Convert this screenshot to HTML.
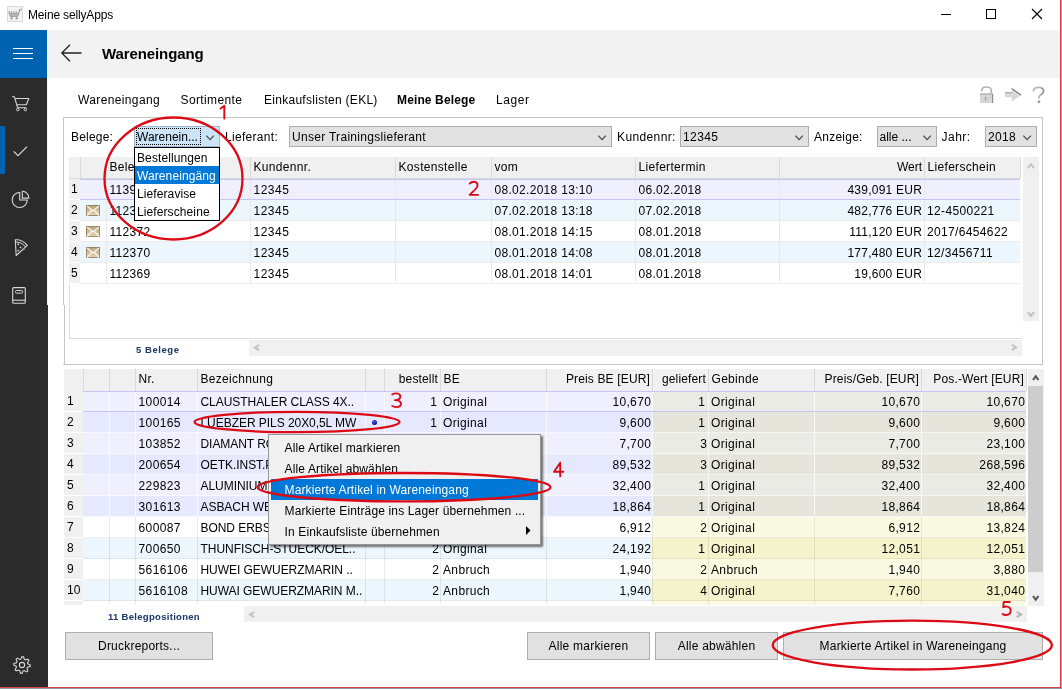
<!DOCTYPE html><html><head><meta charset="utf-8"><style>

html,body{margin:0;padding:0;}
body{width:1062px;height:689px;position:relative;overflow:hidden;background:#fff;font-family:"Liberation Sans", sans-serif;font-size:12px;color:#000;}
div{position:absolute;box-sizing:border-box;}
.t{white-space:nowrap;line-height:14px;}
#root{left:0;top:0;width:1062px;height:689px;overflow:hidden;background:#fff;will-change:transform;}
svg{position:absolute;overflow:visible;}

</style></head><body><div id="root">
<svg style="left:7px;top:6px" width="16" height="16" viewBox="0 0 16 16"><rect x="0.5" y="0.5" width="15" height="15" fill="#f3f3f3" stroke="#dadada"/><g fill="none" stroke="#8c8c8c" stroke-width="1.1"><path d="M1.9 5.2 L3.3 10.3 L10.6 10.3 L12.6 4.3 Q13.1 3.2 14.6 3.2"/><path d="M4.5 5.2 L5 10 M6.9 5.2 L7 10 M9.3 5.2 L8.9 10 M2.5 7.8 L11.5 7.8" stroke="#9a9a9a"/></g><circle cx="4.6" cy="12.3" r="1.1" fill="#8c8c8c"/><circle cx="9.6" cy="12.3" r="1.1" fill="#8c8c8c"/></svg>
<div class="t" style="left:28px;top:8px;font-size:12px;letter-spacing:-0.15px;color:#000;">Meine sellyApps</div>
<div style="left:941px;top:14px;width:10px;height:1px;background:#000;"></div>
<div style="left:986px;top:9px;width:10px;height:10px;border:1px solid #000;"></div>
<svg style="left:1032px;top:9px" width="10" height="10" viewBox="0 0 10 10"><path d="M0 0 L10 10 M10 0 L0 10" stroke="#000" stroke-width="1.1"/></svg>
<div style="left:1060px;top:0px;width:1px;height:689px;background:#d9414a;"></div>
<div style="left:1061px;top:0px;width:1px;height:689px;background:#9aa7b0;"></div>
<div style="left:0px;top:687px;width:1061px;height:1px;background:#d9414a;"></div>
<div style="left:0px;top:688px;width:1062px;height:1px;background:#8e9aa0;"></div>
<div style="left:0px;top:30px;width:47px;height:657px;background:#2b2b2b;"></div>
<div style="left:0px;top:30px;width:47px;height:48px;background:#0063b1;"></div>
<div style="left:13px;top:48px;width:20px;height:1px;background:#fff;"></div>
<div style="left:13px;top:53px;width:20px;height:1px;background:#fff;"></div>
<div style="left:13px;top:58px;width:20px;height:1px;background:#fff;"></div>
<div style="left:47px;top:30px;width:1px;height:275px;background:#f6f6f6;"></div>
<div style="left:47px;top:305px;width:1px;height:382px;background:#2b2b2b;"></div>
<div style="left:0px;top:126px;width:5px;height:48px;background:#0063b1;"></div>
<svg style="left:8px;top:92px" width="26" height="22" viewBox="0 0 26 22"><path d="M4.2 4.5 L6.4 4.8 L9.6 15.7 L18.2 15.7 M6.9 6.5 L20.8 6.5 L18.3 12.8 L9.0 12.8" fill="none" stroke="#d8d8d8" stroke-width="1.1" stroke-linejoin="round"/><circle cx="9.8" cy="17.5" r="1.3" fill="none" stroke="#d8d8d8" stroke-width="1"/><circle cx="17.4" cy="17.5" r="1.3" fill="none" stroke="#d8d8d8" stroke-width="1"/></svg>
<svg style="left:13px;top:146px" width="15" height="11" viewBox="0 0 15 11"><path d="M0.7 5.3 L5 9.6 L14 0.6" fill="none" stroke="#d8d8d8" stroke-width="1.2"/></svg>
<svg style="left:8px;top:186px" width="26" height="26" viewBox="0 0 26 26"><path d="M11.7 6.5 A7.5 7.5 0 1 0 19.2 14 L11.7 14 Z" fill="none" stroke="#d8d8d8" stroke-width="1.1"/><path d="M14.3 5.3 L14.3 12.1 L20.9 12.1 A6.8 6.8 0 0 0 14.3 5.3 Z" fill="none" stroke="#d8d8d8" stroke-width="1.1"/></svg>
<svg style="left:8px;top:234px" width="26" height="26" viewBox="0 0 26 26"><path d="M7.3 5.8 Q14 5.2 19.3 11.3 L8.2 21.5 L7.3 6.4 Z" fill="none" stroke="#d8d8d8" stroke-width="1.1" stroke-linejoin="round"/><path d="M8 8 Q13.5 7.8 17.6 12.6" fill="none" stroke="#d8d8d8" stroke-width="1"/><circle cx="10.3" cy="10.3" r="0.9" fill="#d8d8d8"/><circle cx="12.5" cy="13.4" r="0.9" fill="#d8d8d8"/><circle cx="10.3" cy="16.6" r="0.9" fill="#d8d8d8"/><circle cx="15.8" cy="15.4" r="0.9" fill="#888"/></svg>
<svg style="left:6px;top:282px" width="26" height="26" viewBox="0 0 26 26"><rect x="6.7" y="5.6" width="12.6" height="15.6" rx="1" fill="none" stroke="#d8d8d8" stroke-width="1.1"/><path d="M6.7 18.2 L19.3 18.2" stroke="#d8d8d8" stroke-width="1.1"/><rect x="9.5" y="8.5" width="7.2" height="2.6" rx="1" fill="none" stroke="#d8d8d8" stroke-width="1"/></svg>
<svg style="left:11.5px;top:654.5px" width="20" height="20" viewBox="0 0 20 20"><polygon points="10.00,1.70 11.62,1.86 12.30,4.46 13.33,5.01 15.87,4.13 16.90,5.39 15.54,7.70 15.88,8.83 18.30,10.00 18.14,11.62 15.54,12.30 14.99,13.33 15.87,15.87 14.61,16.90 12.30,15.54 11.17,15.88 10.00,18.30 8.38,18.14 7.70,15.54 6.67,14.99 4.13,15.87 3.10,14.61 4.46,12.30 4.12,11.17 1.70,10.00 1.86,8.38 4.46,7.70 5.01,6.67 4.13,4.13 5.39,3.10 7.70,4.46 8.83,4.12" fill="none" stroke="#d8d8d8" stroke-width="1.1"/><circle cx="10" cy="10" r="2.6" fill="none" stroke="#d8d8d8" stroke-width="1.1"/></svg>
<div style="left:48px;top:30px;width:1012px;height:48px;background:#f2f2f2;"></div>
<svg style="left:61px;top:44px" width="21" height="18" viewBox="0 0 21 18"><path d="M9 0.7 L0.8 9 L9 17.3 M0.8 9 L20.5 9" fill="none" stroke="#222" stroke-width="1.3"/></svg>
<div class="t" style="left:102px;top:46px;font-size:15px;font-weight:bold;letter-spacing:-0.1px;line-height:16px;">Wareneingang</div>
<div class="t" style="left:78px;top:93px;letter-spacing:0.37px;">Wareneingang</div>
<div class="t" style="left:180.5px;top:93px;letter-spacing:0.38px;">Sortimente</div>
<div class="t" style="left:264px;top:93px;letter-spacing:0.28px;">Einkaufslisten (EKL)</div>
<div class="t" style="left:397px;top:93px;font-weight:bold;letter-spacing:0.13px;">Meine Belege</div>
<div class="t" style="left:496px;top:93px;letter-spacing:0.6px;">Lager</div>
<svg style="left:975px;top:82px" width="75" height="26" viewBox="0 0 75 26"><path d="M6.6 9.6 Q6.5 5 11 5 Q16.2 5 16.2 8 L16.2 11.5" fill="none" stroke="#b4b4b4" stroke-width="1.6"/><rect x="5" y="11.5" width="13" height="9.5" fill="#d6d6d6"/><rect x="5" y="11.5" width="13" height="1" fill="#a8a8a8"/><rect x="17" y="12" width="1.2" height="9" fill="#8c8c8c"/><rect x="10" y="15" width="1.2" height="3.5" fill="#9a9a9a"/><rect x="30" y="10.2" width="7" height="5" fill="#d9d9d9"/><rect x="30" y="10.2" width="7" height="1" fill="#a0a0a0"/><path d="M36.7 6.4 L46 13.1 L36.7 19.8 Z" fill="#d9d9d9"/><path d="M36.7 6.4 L46 13.1" stroke="#808080" stroke-width="1.2"/><path d="M58.5 9.5 Q58.5 5.3 63.5 5.3 Q68.6 5.3 68.6 9 Q68.6 11.5 65.5 13 Q63.8 14 63.8 16.5" fill="none" stroke="#b8b8b8" stroke-width="1.8"/><path d="M66 5.8 Q68.6 6.5 68.6 9 Q68.6 11.5 65.5 13" fill="none" stroke="#8a8a8a" stroke-width="1"/><rect x="62.7" y="18.5" width="2.5" height="2.5" fill="#9a9a9a"/></svg>
<div style="left:63px;top:117px;width:980px;height:248px;border:1px solid #c6c6c6;border-left:none;"></div>
<div style="left:63px;top:117px;width:1px;height:188px;background:#c6c6c6;"></div>
<div style="left:64px;top:305px;width:1px;height:60px;background:#c6c6c6;"></div>
<div class="t" style="left:71px;top:130px;letter-spacing:0.2px;">Belege:</div>
<div style="left:134px;top:126px;width:86px;height:21px;background:#cce4f7;border:1px solid #9fb6cc;"></div>
<div class="t" style="left:137px;top:130px;letter-spacing:0px;">Warenein...</div>
<svg style="left:206px;top:135px" width="9" height="6" viewBox="0 0 9 6"><path d="M0.3 0.6 L4.1 4.6 L7.9 0.6" fill="none" stroke="#4a4a4a" stroke-width="1.25"/></svg>
<div style="left:136px;top:128px;width:65px;height:17px;border:1px dotted #000;"></div>
<div class="t" style="left:225px;top:130px;letter-spacing:0.3px;">Lieferant:</div>
<div style="left:289px;top:126px;width:323px;height:21px;background:#e1e1e1;border:1px solid #aaadb2;"></div>
<div class="t" style="left:292px;top:130px;letter-spacing:0.3px;">Unser Trainingslieferant</div>
<svg style="left:598px;top:135px" width="9" height="6" viewBox="0 0 9 6"><path d="M0.3 0.6 L4.1 4.6 L7.9 0.6" fill="none" stroke="#4a4a4a" stroke-width="1.25"/></svg>
<div class="t" style="left:617px;top:130px;letter-spacing:0.38px;">Kundennr:</div>
<div style="left:680px;top:126px;width:129px;height:21px;background:#e1e1e1;border:1px solid #aaadb2;"></div>
<div class="t" style="left:683px;top:130px;letter-spacing:0.4px;">12345</div>
<svg style="left:795px;top:135px" width="9" height="6" viewBox="0 0 9 6"><path d="M0.3 0.6 L4.1 4.6 L7.9 0.6" fill="none" stroke="#4a4a4a" stroke-width="1.25"/></svg>
<div class="t" style="left:814px;top:130px;letter-spacing:0.25px;">Anzeige:</div>
<div style="left:877px;top:126px;width:60px;height:21px;background:#e1e1e1;border:1px solid #aaadb2;"></div>
<div class="t" style="left:879.5px;top:130px;letter-spacing:0px;">alle ...</div>
<svg style="left:923px;top:135px" width="9" height="6" viewBox="0 0 9 6"><path d="M0.3 0.6 L4.1 4.6 L7.9 0.6" fill="none" stroke="#4a4a4a" stroke-width="1.25"/></svg>
<div class="t" style="left:941.5px;top:130px;letter-spacing:0.5px;">Jahr:</div>
<div style="left:985px;top:126px;width:52px;height:21px;background:#e1e1e1;border:1px solid #aaadb2;"></div>
<div class="t" style="left:988px;top:130px;letter-spacing:0.3px;">2018</div>
<svg style="left:1023px;top:135px" width="9" height="6" viewBox="0 0 9 6"><path d="M0.3 0.6 L4.1 4.6 L7.9 0.6" fill="none" stroke="#4a4a4a" stroke-width="1.25"/></svg>
<div style="left:69px;top:157px;width:951px;height:22px;background:#f0f0f0;border-bottom:1px solid #dadada;"></div>
<div style="left:80px;top:157px;width:1px;height:22px;background:#dadada;"></div>
<div style="left:106px;top:157px;width:1px;height:22px;background:#dadada;"></div>
<div style="left:250px;top:157px;width:1px;height:22px;background:#dadada;"></div>
<div style="left:395px;top:157px;width:1px;height:22px;background:#dadada;"></div>
<div style="left:491px;top:157px;width:1px;height:22px;background:#dadada;"></div>
<div style="left:635px;top:157px;width:1px;height:22px;background:#dadada;"></div>
<div style="left:779px;top:157px;width:1px;height:22px;background:#dadada;"></div>
<div style="left:924px;top:157px;width:1px;height:22px;background:#dadada;"></div>
<div style="left:1020px;top:157px;width:1px;height:22px;background:#dadada;"></div>
<div class="t" style="left:109.5px;top:160px;letter-spacing:0.32px;">Belegnr.</div>
<div class="t" style="left:253.5px;top:160px;letter-spacing:0.32px;">Kundennr.</div>
<div class="t" style="left:398.5px;top:160px;letter-spacing:0.32px;">Kostenstelle</div>
<div class="t" style="left:494.5px;top:160px;letter-spacing:0.32px;">vom</div>
<div class="t" style="left:638.5px;top:160px;letter-spacing:0.32px;">Liefertermin</div>
<div class="t" style="left:779px;top:160px;width:143px;text-align:right;">Wert</div>
<div class="t" style="left:927.5px;top:160px;letter-spacing:0.32px;">Lieferschein</div>
<div style="left:69px;top:179px;width:11px;height:21px;background:#f0f0f0;border-bottom:1px solid #fff;"></div>
<div class="t" style="left:71px;top:182px;">1</div>
<div style="left:80px;top:179px;width:940px;height:21px;background:#efeffd;"></div>
<div style="left:106px;top:179px;width:1px;height:21px;background:#e8e8e8;"></div>
<div style="left:250px;top:179px;width:1px;height:21px;background:#e8e8e8;"></div>
<div style="left:395px;top:179px;width:1px;height:21px;background:#e8e8e8;"></div>
<div style="left:491px;top:179px;width:1px;height:21px;background:#e8e8e8;"></div>
<div style="left:635px;top:179px;width:1px;height:21px;background:#e8e8e8;"></div>
<div style="left:779px;top:179px;width:1px;height:21px;background:#e8e8e8;"></div>
<div style="left:924px;top:179px;width:1px;height:21px;background:#e8e8e8;"></div>
<div style="left:80px;top:179px;width:940px;height:1px;background:#c5c5f5;"></div>
<div style="left:80px;top:199px;width:940px;height:1px;background:#c5c5f5;"></div>
<div class="t" style="left:109.5px;top:183px;letter-spacing:0.3px;">113938</div>
<div class="t" style="left:253.5px;top:183px;letter-spacing:0.5px;">12345</div>
<div class="t" style="left:494.5px;top:183px;letter-spacing:0.3px;">08.02.2018 13:10</div>
<div class="t" style="left:638.5px;top:183px;letter-spacing:0.3px;">06.02.2018</div>
<div class="t" style="left:779px;top:183px;width:143.2px;text-align:right;letter-spacing:0.25px;">439,091 EUR</div>
<div class="t" style="left:927px;top:183px;letter-spacing:0.35px;"></div>
<div style="left:69px;top:200px;width:11px;height:21px;background:#f0f0f0;border-bottom:1px solid #fff;"></div>
<div class="t" style="left:71px;top:203px;">2</div>
<div style="left:80px;top:200px;width:940px;height:21px;background:#ebf6fd;"></div>
<div style="left:106px;top:200px;width:1px;height:21px;background:#e8e8e8;"></div>
<div style="left:250px;top:200px;width:1px;height:21px;background:#e8e8e8;"></div>
<div style="left:395px;top:200px;width:1px;height:21px;background:#e8e8e8;"></div>
<div style="left:491px;top:200px;width:1px;height:21px;background:#e8e8e8;"></div>
<div style="left:635px;top:200px;width:1px;height:21px;background:#e8e8e8;"></div>
<div style="left:779px;top:200px;width:1px;height:21px;background:#e8e8e8;"></div>
<div style="left:924px;top:200px;width:1px;height:21px;background:#e8e8e8;"></div>
<div style="left:80px;top:220px;width:940px;height:1px;background:#ececec;"></div>
<svg style="left:86px;top:205px" width="14" height="11" viewBox="0 0 14 11"><defs><linearGradient id="eg" x1="0" y1="0" x2="0" y2="1"><stop offset="0" stop-color="#b9a582"/><stop offset="1" stop-color="#e3d3b5"/></linearGradient></defs><rect x="0" y="0" width="14" height="11" fill="#8f7b5c"/><rect x="0.8" y="0.8" width="12.4" height="9.4" fill="url(#eg)"/><path d="M1 1 L7 6 L13 1 M1 10.5 L5.5 5.5 M13 10.5 L8.5 5.5" fill="none" stroke="#fbf7ef" stroke-width="1.2"/></svg>
<div class="t" style="left:109.5px;top:204px;letter-spacing:0.3px;">112373</div>
<div class="t" style="left:253.5px;top:204px;letter-spacing:0.5px;">12345</div>
<div class="t" style="left:494.5px;top:204px;letter-spacing:0.3px;">07.02.2018 13:18</div>
<div class="t" style="left:638.5px;top:204px;letter-spacing:0.3px;">07.02.2018</div>
<div class="t" style="left:779px;top:204px;width:143.2px;text-align:right;letter-spacing:0.25px;">482,776 EUR</div>
<div class="t" style="left:927px;top:204px;letter-spacing:0.35px;">12-4500221</div>
<div style="left:69px;top:221px;width:11px;height:21px;background:#f0f0f0;border-bottom:1px solid #fff;"></div>
<div class="t" style="left:71px;top:224px;">3</div>
<div style="left:80px;top:221px;width:940px;height:21px;background:#ffffff;"></div>
<div style="left:106px;top:221px;width:1px;height:21px;background:#e8e8e8;"></div>
<div style="left:250px;top:221px;width:1px;height:21px;background:#e8e8e8;"></div>
<div style="left:395px;top:221px;width:1px;height:21px;background:#e8e8e8;"></div>
<div style="left:491px;top:221px;width:1px;height:21px;background:#e8e8e8;"></div>
<div style="left:635px;top:221px;width:1px;height:21px;background:#e8e8e8;"></div>
<div style="left:779px;top:221px;width:1px;height:21px;background:#e8e8e8;"></div>
<div style="left:924px;top:221px;width:1px;height:21px;background:#e8e8e8;"></div>
<div style="left:80px;top:241px;width:940px;height:1px;background:#ececec;"></div>
<svg style="left:86px;top:226px" width="14" height="11" viewBox="0 0 14 11"><defs><linearGradient id="eg" x1="0" y1="0" x2="0" y2="1"><stop offset="0" stop-color="#b9a582"/><stop offset="1" stop-color="#e3d3b5"/></linearGradient></defs><rect x="0" y="0" width="14" height="11" fill="#8f7b5c"/><rect x="0.8" y="0.8" width="12.4" height="9.4" fill="url(#eg)"/><path d="M1 1 L7 6 L13 1 M1 10.5 L5.5 5.5 M13 10.5 L8.5 5.5" fill="none" stroke="#fbf7ef" stroke-width="1.2"/></svg>
<div class="t" style="left:109.5px;top:225px;letter-spacing:0.3px;">112372</div>
<div class="t" style="left:253.5px;top:225px;letter-spacing:0.5px;">12345</div>
<div class="t" style="left:494.5px;top:225px;letter-spacing:0.3px;">08.01.2018 14:15</div>
<div class="t" style="left:638.5px;top:225px;letter-spacing:0.3px;">08.01.2018</div>
<div class="t" style="left:779px;top:225px;width:143.2px;text-align:right;letter-spacing:0.25px;">111,120 EUR</div>
<div class="t" style="left:927px;top:225px;letter-spacing:0.35px;">2017/6454622</div>
<div style="left:69px;top:242px;width:11px;height:21px;background:#f0f0f0;border-bottom:1px solid #fff;"></div>
<div class="t" style="left:71px;top:245px;">4</div>
<div style="left:80px;top:242px;width:940px;height:21px;background:#ebf6fd;"></div>
<div style="left:106px;top:242px;width:1px;height:21px;background:#e8e8e8;"></div>
<div style="left:250px;top:242px;width:1px;height:21px;background:#e8e8e8;"></div>
<div style="left:395px;top:242px;width:1px;height:21px;background:#e8e8e8;"></div>
<div style="left:491px;top:242px;width:1px;height:21px;background:#e8e8e8;"></div>
<div style="left:635px;top:242px;width:1px;height:21px;background:#e8e8e8;"></div>
<div style="left:779px;top:242px;width:1px;height:21px;background:#e8e8e8;"></div>
<div style="left:924px;top:242px;width:1px;height:21px;background:#e8e8e8;"></div>
<div style="left:80px;top:262px;width:940px;height:1px;background:#ececec;"></div>
<svg style="left:86px;top:247px" width="14" height="11" viewBox="0 0 14 11"><defs><linearGradient id="eg" x1="0" y1="0" x2="0" y2="1"><stop offset="0" stop-color="#b9a582"/><stop offset="1" stop-color="#e3d3b5"/></linearGradient></defs><rect x="0" y="0" width="14" height="11" fill="#8f7b5c"/><rect x="0.8" y="0.8" width="12.4" height="9.4" fill="url(#eg)"/><path d="M1 1 L7 6 L13 1 M1 10.5 L5.5 5.5 M13 10.5 L8.5 5.5" fill="none" stroke="#fbf7ef" stroke-width="1.2"/></svg>
<div class="t" style="left:109.5px;top:246px;letter-spacing:0.3px;">112370</div>
<div class="t" style="left:253.5px;top:246px;letter-spacing:0.5px;">12345</div>
<div class="t" style="left:494.5px;top:246px;letter-spacing:0.3px;">08.01.2018 14:08</div>
<div class="t" style="left:638.5px;top:246px;letter-spacing:0.3px;">08.01.2018</div>
<div class="t" style="left:779px;top:246px;width:143.2px;text-align:right;letter-spacing:0.25px;">177,480 EUR</div>
<div class="t" style="left:927px;top:246px;letter-spacing:0.35px;">12/3456711</div>
<div style="left:69px;top:263px;width:11px;height:21px;background:#f0f0f0;border-bottom:1px solid #fff;"></div>
<div class="t" style="left:71px;top:266px;">5</div>
<div style="left:80px;top:263px;width:940px;height:21px;background:#ffffff;"></div>
<div style="left:106px;top:263px;width:1px;height:21px;background:#e8e8e8;"></div>
<div style="left:250px;top:263px;width:1px;height:21px;background:#e8e8e8;"></div>
<div style="left:395px;top:263px;width:1px;height:21px;background:#e8e8e8;"></div>
<div style="left:491px;top:263px;width:1px;height:21px;background:#e8e8e8;"></div>
<div style="left:635px;top:263px;width:1px;height:21px;background:#e8e8e8;"></div>
<div style="left:779px;top:263px;width:1px;height:21px;background:#e8e8e8;"></div>
<div style="left:924px;top:263px;width:1px;height:21px;background:#e8e8e8;"></div>
<div style="left:80px;top:283px;width:940px;height:1px;background:#ececec;"></div>
<div class="t" style="left:109.5px;top:267px;letter-spacing:0.3px;">112369</div>
<div class="t" style="left:253.5px;top:267px;letter-spacing:0.5px;">12345</div>
<div class="t" style="left:494.5px;top:267px;letter-spacing:0.3px;">08.01.2018 14:01</div>
<div class="t" style="left:638.5px;top:267px;letter-spacing:0.3px;">08.01.2018</div>
<div class="t" style="left:779px;top:267px;width:143.2px;text-align:right;letter-spacing:0.25px;">19,600 EUR</div>
<div class="t" style="left:927px;top:267px;letter-spacing:0.35px;"></div>
<div style="left:69px;top:284px;width:953px;height:55px;border-left:1px solid #dcdcdc;border-bottom:1px solid #dcdcdc;"></div>
<div style="left:1023px;top:157px;width:16px;height:164px;background:#f0f0f0;"></div>
<div style="left:249px;top:340px;width:773px;height:16px;background:#f0f0f0;"></div>
<div class="t" style="left:136px;top:343px;font-size:9.5px;font-weight:bold;letter-spacing:0.55px;color:#1b3766;">5 Belege</div>
<div style="left:134px;top:147px;width:86px;height:74px;background:#fff;border:1px solid #000;"></div>
<div class="t" style="left:137px;top:151px;letter-spacing:0.1px;">Bestellungen</div>
<div style="left:135px;top:166px;width:84px;height:18px;background:#0078d7;"></div>
<div class="t" style="left:137px;top:169px;color:#fff;letter-spacing:0.1px;">Wareneing&auml;ng</div>
<div class="t" style="left:137px;top:187px;letter-spacing:0.1px;">Lieferavise</div>
<div class="t" style="left:137px;top:205px;letter-spacing:0.1px;">Lieferscheine</div>
<div style="left:64px;top:369px;width:962px;height:22px;background:#f0f0f0;"></div>
<div style="left:83px;top:369px;width:1px;height:22px;background:#dadada;"></div>
<div style="left:109px;top:369px;width:1px;height:22px;background:#dadada;"></div>
<div style="left:135px;top:369px;width:1px;height:22px;background:#dadada;"></div>
<div style="left:197px;top:369px;width:1px;height:22px;background:#dadada;"></div>
<div style="left:365px;top:369px;width:1px;height:22px;background:#dadada;"></div>
<div style="left:384px;top:369px;width:1px;height:22px;background:#dadada;"></div>
<div style="left:440px;top:369px;width:1px;height:22px;background:#dadada;"></div>
<div style="left:546px;top:369px;width:1px;height:22px;background:#dadada;"></div>
<div style="left:652px;top:369px;width:1px;height:22px;background:#dadada;"></div>
<div style="left:708px;top:369px;width:1px;height:22px;background:#dadada;"></div>
<div style="left:814px;top:369px;width:1px;height:22px;background:#dadada;"></div>
<div style="left:921px;top:369px;width:1px;height:22px;background:#dadada;"></div>
<div style="left:1026px;top:369px;width:1px;height:22px;background:#dadada;"></div>
<div class="t" style="left:138.5px;top:372px;letter-spacing:0.3px;">Nr.</div>
<div class="t" style="left:200.5px;top:372px;letter-spacing:0.3px;">Bezeichnung</div>
<div class="t" style="left:384px;top:372px;width:54px;text-align:right;letter-spacing:0.15px;">bestellt</div>
<div class="t" style="left:443.5px;top:372px;letter-spacing:0.3px;">BE</div>
<div class="t" style="left:546px;top:372px;width:104px;text-align:right;letter-spacing:0.15px;">Preis BE [EUR]</div>
<div class="t" style="left:652px;top:372px;width:54px;text-align:right;letter-spacing:0.15px;">geliefert</div>
<div class="t" style="left:711.5px;top:372px;letter-spacing:0.3px;">Gebinde</div>
<div class="t" style="left:814px;top:372px;width:105px;text-align:right;letter-spacing:0.15px;">Preis/Geb. [EUR]</div>
<div class="t" style="left:921px;top:372px;width:103px;text-align:right;letter-spacing:0.15px;">Pos.-Wert [EUR]</div>
<div style="left:0;top:0;width:1062px;height:605px;overflow:hidden;">
<div style="left:64px;top:391px;width:19px;height:21px;background:#f0f0f0;border-bottom:1px solid #fff;"></div>
<div class="t" style="left:67px;top:394px;">1</div>
<div style="left:83px;top:391px;width:569px;height:21px;background:#f0effd;"></div>
<div style="left:652px;top:391px;width:374px;height:21px;background:#ebebe6;"></div>
<div style="left:109px;top:391px;width:1px;height:21px;background:rgba(255,255,255,0.7);"></div>
<div style="left:135px;top:391px;width:1px;height:21px;background:rgba(255,255,255,0.7);"></div>
<div style="left:197px;top:391px;width:1px;height:21px;background:rgba(255,255,255,0.7);"></div>
<div style="left:365px;top:391px;width:1px;height:21px;background:rgba(255,255,255,0.7);"></div>
<div style="left:384px;top:391px;width:1px;height:21px;background:rgba(255,255,255,0.7);"></div>
<div style="left:440px;top:391px;width:1px;height:21px;background:rgba(255,255,255,0.7);"></div>
<div style="left:546px;top:391px;width:1px;height:21px;background:rgba(255,255,255,0.7);"></div>
<div style="left:652px;top:391px;width:1px;height:21px;background:rgba(255,255,255,0.7);"></div>
<div style="left:708px;top:391px;width:1px;height:21px;background:rgba(255,255,255,0.7);"></div>
<div style="left:814px;top:391px;width:1px;height:21px;background:rgba(255,255,255,0.7);"></div>
<div style="left:921px;top:391px;width:1px;height:21px;background:rgba(255,255,255,0.7);"></div>
<div style="left:83px;top:411px;width:943px;height:1px;background:rgba(255,255,255,0.6);"></div>
<div style="left:83px;top:391px;width:943px;height:1px;background:#c5c5f5;"></div>
<div style="left:83px;top:411px;width:943px;height:1px;background:#c5c5f5;"></div>
<div class="t" style="left:138.5px;top:395px;letter-spacing:0.4px;">100014</div>
<div class="t" style="left:200.5px;top:395px;letter-spacing:-0.05px;">CLAUSTHALER CLASS 4X..</div>
<div class="t" style="left:384px;top:395px;width:53.2px;text-align:right;letter-spacing:0.35px;">1</div>
<div class="t" style="left:443px;top:395px;letter-spacing:0.35px;">Original</div>
<div class="t" style="left:546px;top:395px;width:105.2px;text-align:right;letter-spacing:0.35px;">10,670</div>
<div class="t" style="left:652px;top:395px;width:53.2px;text-align:right;letter-spacing:0.35px;">1</div>
<div class="t" style="left:711px;top:395px;letter-spacing:0.35px;">Original</div>
<div class="t" style="left:814px;top:395px;width:106.2px;text-align:right;letter-spacing:0.35px;">10,670</div>
<div class="t" style="left:921px;top:395px;width:104.2px;text-align:right;letter-spacing:0.35px;">10,670</div>
<div style="left:64px;top:412px;width:19px;height:21px;background:#f0f0f0;border-bottom:1px solid #fff;"></div>
<div class="t" style="left:67px;top:415px;">2</div>
<div style="left:83px;top:412px;width:569px;height:21px;background:#e6e9fd;"></div>
<div style="left:652px;top:412px;width:374px;height:21px;background:#e5e5dc;"></div>
<div style="left:109px;top:412px;width:1px;height:21px;background:rgba(255,255,255,0.7);"></div>
<div style="left:135px;top:412px;width:1px;height:21px;background:rgba(255,255,255,0.7);"></div>
<div style="left:197px;top:412px;width:1px;height:21px;background:rgba(255,255,255,0.7);"></div>
<div style="left:365px;top:412px;width:1px;height:21px;background:rgba(255,255,255,0.7);"></div>
<div style="left:384px;top:412px;width:1px;height:21px;background:rgba(255,255,255,0.7);"></div>
<div style="left:440px;top:412px;width:1px;height:21px;background:rgba(255,255,255,0.7);"></div>
<div style="left:546px;top:412px;width:1px;height:21px;background:rgba(255,255,255,0.7);"></div>
<div style="left:652px;top:412px;width:1px;height:21px;background:rgba(255,255,255,0.7);"></div>
<div style="left:708px;top:412px;width:1px;height:21px;background:rgba(255,255,255,0.7);"></div>
<div style="left:814px;top:412px;width:1px;height:21px;background:rgba(255,255,255,0.7);"></div>
<div style="left:921px;top:412px;width:1px;height:21px;background:rgba(255,255,255,0.7);"></div>
<div style="left:83px;top:432px;width:943px;height:1px;background:rgba(255,255,255,0.6);"></div>
<div class="t" style="left:138.5px;top:416px;letter-spacing:0.4px;">100165</div>
<div class="t" style="left:200.5px;top:416px;letter-spacing:-0.05px;">LUEBZER PILS 20X0,5L MW</div>
<div class="t" style="left:384px;top:416px;width:53.2px;text-align:right;letter-spacing:0.35px;">1</div>
<div class="t" style="left:443px;top:416px;letter-spacing:0.35px;">Original</div>
<div class="t" style="left:546px;top:416px;width:105.2px;text-align:right;letter-spacing:0.35px;">9,600</div>
<div class="t" style="left:652px;top:416px;width:53.2px;text-align:right;letter-spacing:0.35px;">1</div>
<div class="t" style="left:711px;top:416px;letter-spacing:0.35px;">Original</div>
<div class="t" style="left:814px;top:416px;width:106.2px;text-align:right;letter-spacing:0.35px;">9,600</div>
<div class="t" style="left:921px;top:416px;width:104.2px;text-align:right;letter-spacing:0.35px;">9,600</div>
<div style="left:64px;top:433px;width:19px;height:21px;background:#f0f0f0;border-bottom:1px solid #fff;"></div>
<div class="t" style="left:67px;top:436px;">3</div>
<div style="left:83px;top:433px;width:569px;height:21px;background:#f0effd;"></div>
<div style="left:652px;top:433px;width:374px;height:21px;background:#ebebe6;"></div>
<div style="left:109px;top:433px;width:1px;height:21px;background:rgba(255,255,255,0.7);"></div>
<div style="left:135px;top:433px;width:1px;height:21px;background:rgba(255,255,255,0.7);"></div>
<div style="left:197px;top:433px;width:1px;height:21px;background:rgba(255,255,255,0.7);"></div>
<div style="left:365px;top:433px;width:1px;height:21px;background:rgba(255,255,255,0.7);"></div>
<div style="left:384px;top:433px;width:1px;height:21px;background:rgba(255,255,255,0.7);"></div>
<div style="left:440px;top:433px;width:1px;height:21px;background:rgba(255,255,255,0.7);"></div>
<div style="left:546px;top:433px;width:1px;height:21px;background:rgba(255,255,255,0.7);"></div>
<div style="left:652px;top:433px;width:1px;height:21px;background:rgba(255,255,255,0.7);"></div>
<div style="left:708px;top:433px;width:1px;height:21px;background:rgba(255,255,255,0.7);"></div>
<div style="left:814px;top:433px;width:1px;height:21px;background:rgba(255,255,255,0.7);"></div>
<div style="left:921px;top:433px;width:1px;height:21px;background:rgba(255,255,255,0.7);"></div>
<div style="left:83px;top:453px;width:943px;height:1px;background:rgba(255,255,255,0.6);"></div>
<div class="t" style="left:138.5px;top:437px;letter-spacing:0.4px;">103852</div>
<div class="t" style="left:200.5px;top:437px;letter-spacing:-0.05px;">DIAMANT ROHRZUCKER</div>
<div class="t" style="left:384px;top:437px;width:55.2px;text-align:right;letter-spacing:0.35px;">3</div>
<div class="t" style="left:443px;top:437px;letter-spacing:0.35px;">Original</div>
<div class="t" style="left:546px;top:437px;width:105.2px;text-align:right;letter-spacing:0.35px;">7,700</div>
<div class="t" style="left:652px;top:437px;width:55.2px;text-align:right;letter-spacing:0.35px;">3</div>
<div class="t" style="left:711px;top:437px;letter-spacing:0.35px;">Original</div>
<div class="t" style="left:814px;top:437px;width:106.2px;text-align:right;letter-spacing:0.35px;">7,700</div>
<div class="t" style="left:921px;top:437px;width:104.2px;text-align:right;letter-spacing:0.35px;">23,100</div>
<div style="left:64px;top:454px;width:19px;height:21px;background:#f0f0f0;border-bottom:1px solid #fff;"></div>
<div class="t" style="left:67px;top:457px;">4</div>
<div style="left:83px;top:454px;width:569px;height:21px;background:#e6e9fd;"></div>
<div style="left:652px;top:454px;width:374px;height:21px;background:#e5e5dc;"></div>
<div style="left:109px;top:454px;width:1px;height:21px;background:rgba(255,255,255,0.7);"></div>
<div style="left:135px;top:454px;width:1px;height:21px;background:rgba(255,255,255,0.7);"></div>
<div style="left:197px;top:454px;width:1px;height:21px;background:rgba(255,255,255,0.7);"></div>
<div style="left:365px;top:454px;width:1px;height:21px;background:rgba(255,255,255,0.7);"></div>
<div style="left:384px;top:454px;width:1px;height:21px;background:rgba(255,255,255,0.7);"></div>
<div style="left:440px;top:454px;width:1px;height:21px;background:rgba(255,255,255,0.7);"></div>
<div style="left:546px;top:454px;width:1px;height:21px;background:rgba(255,255,255,0.7);"></div>
<div style="left:652px;top:454px;width:1px;height:21px;background:rgba(255,255,255,0.7);"></div>
<div style="left:708px;top:454px;width:1px;height:21px;background:rgba(255,255,255,0.7);"></div>
<div style="left:814px;top:454px;width:1px;height:21px;background:rgba(255,255,255,0.7);"></div>
<div style="left:921px;top:454px;width:1px;height:21px;background:rgba(255,255,255,0.7);"></div>
<div style="left:83px;top:474px;width:943px;height:1px;background:rgba(255,255,255,0.6);"></div>
<div class="t" style="left:138.5px;top:458px;letter-spacing:0.4px;">200654</div>
<div class="t" style="left:200.5px;top:458px;letter-spacing:-0.05px;">OETK.INST.PUDDING</div>
<div class="t" style="left:384px;top:458px;width:55.2px;text-align:right;letter-spacing:0.35px;">3</div>
<div class="t" style="left:443px;top:458px;letter-spacing:0.35px;">Original</div>
<div class="t" style="left:546px;top:458px;width:105.2px;text-align:right;letter-spacing:0.35px;">89,532</div>
<div class="t" style="left:652px;top:458px;width:55.2px;text-align:right;letter-spacing:0.35px;">3</div>
<div class="t" style="left:711px;top:458px;letter-spacing:0.35px;">Original</div>
<div class="t" style="left:814px;top:458px;width:106.2px;text-align:right;letter-spacing:0.35px;">89,532</div>
<div class="t" style="left:921px;top:458px;width:104.2px;text-align:right;letter-spacing:0.35px;">268,596</div>
<div style="left:64px;top:475px;width:19px;height:21px;background:#f0f0f0;border-bottom:1px solid #fff;"></div>
<div class="t" style="left:67px;top:478px;">5</div>
<div style="left:83px;top:475px;width:569px;height:21px;background:#f0effd;"></div>
<div style="left:652px;top:475px;width:374px;height:21px;background:#ebebe6;"></div>
<div style="left:109px;top:475px;width:1px;height:21px;background:rgba(255,255,255,0.7);"></div>
<div style="left:135px;top:475px;width:1px;height:21px;background:rgba(255,255,255,0.7);"></div>
<div style="left:197px;top:475px;width:1px;height:21px;background:rgba(255,255,255,0.7);"></div>
<div style="left:365px;top:475px;width:1px;height:21px;background:rgba(255,255,255,0.7);"></div>
<div style="left:384px;top:475px;width:1px;height:21px;background:rgba(255,255,255,0.7);"></div>
<div style="left:440px;top:475px;width:1px;height:21px;background:rgba(255,255,255,0.7);"></div>
<div style="left:546px;top:475px;width:1px;height:21px;background:rgba(255,255,255,0.7);"></div>
<div style="left:652px;top:475px;width:1px;height:21px;background:rgba(255,255,255,0.7);"></div>
<div style="left:708px;top:475px;width:1px;height:21px;background:rgba(255,255,255,0.7);"></div>
<div style="left:814px;top:475px;width:1px;height:21px;background:rgba(255,255,255,0.7);"></div>
<div style="left:921px;top:475px;width:1px;height:21px;background:rgba(255,255,255,0.7);"></div>
<div style="left:83px;top:495px;width:943px;height:1px;background:rgba(255,255,255,0.6);"></div>
<div class="t" style="left:138.5px;top:479px;letter-spacing:0.4px;">229823</div>
<div class="t" style="left:200.5px;top:479px;letter-spacing:-0.05px;">ALUMINIUMFOLIE 30M</div>
<div class="t" style="left:384px;top:479px;width:53.2px;text-align:right;letter-spacing:0.35px;">1</div>
<div class="t" style="left:443px;top:479px;letter-spacing:0.35px;">Original</div>
<div class="t" style="left:546px;top:479px;width:105.2px;text-align:right;letter-spacing:0.35px;">32,400</div>
<div class="t" style="left:652px;top:479px;width:53.2px;text-align:right;letter-spacing:0.35px;">1</div>
<div class="t" style="left:711px;top:479px;letter-spacing:0.35px;">Original</div>
<div class="t" style="left:814px;top:479px;width:106.2px;text-align:right;letter-spacing:0.35px;">32,400</div>
<div class="t" style="left:921px;top:479px;width:104.2px;text-align:right;letter-spacing:0.35px;">32,400</div>
<div style="left:64px;top:496px;width:19px;height:21px;background:#f0f0f0;border-bottom:1px solid #fff;"></div>
<div class="t" style="left:67px;top:499px;">6</div>
<div style="left:83px;top:496px;width:569px;height:21px;background:#e6e9fd;"></div>
<div style="left:652px;top:496px;width:374px;height:21px;background:#e5e5dc;"></div>
<div style="left:109px;top:496px;width:1px;height:21px;background:rgba(255,255,255,0.7);"></div>
<div style="left:135px;top:496px;width:1px;height:21px;background:rgba(255,255,255,0.7);"></div>
<div style="left:197px;top:496px;width:1px;height:21px;background:rgba(255,255,255,0.7);"></div>
<div style="left:365px;top:496px;width:1px;height:21px;background:rgba(255,255,255,0.7);"></div>
<div style="left:384px;top:496px;width:1px;height:21px;background:rgba(255,255,255,0.7);"></div>
<div style="left:440px;top:496px;width:1px;height:21px;background:rgba(255,255,255,0.7);"></div>
<div style="left:546px;top:496px;width:1px;height:21px;background:rgba(255,255,255,0.7);"></div>
<div style="left:652px;top:496px;width:1px;height:21px;background:rgba(255,255,255,0.7);"></div>
<div style="left:708px;top:496px;width:1px;height:21px;background:rgba(255,255,255,0.7);"></div>
<div style="left:814px;top:496px;width:1px;height:21px;background:rgba(255,255,255,0.7);"></div>
<div style="left:921px;top:496px;width:1px;height:21px;background:rgba(255,255,255,0.7);"></div>
<div style="left:83px;top:516px;width:943px;height:1px;background:rgba(255,255,255,0.6);"></div>
<div class="t" style="left:138.5px;top:500px;letter-spacing:0.4px;">301613</div>
<div class="t" style="left:200.5px;top:500px;letter-spacing:-0.05px;">ASBACH WEINBRAND</div>
<div class="t" style="left:384px;top:500px;width:53.2px;text-align:right;letter-spacing:0.35px;">1</div>
<div class="t" style="left:443px;top:500px;letter-spacing:0.35px;">Original</div>
<div class="t" style="left:546px;top:500px;width:105.2px;text-align:right;letter-spacing:0.35px;">18,864</div>
<div class="t" style="left:652px;top:500px;width:53.2px;text-align:right;letter-spacing:0.35px;">1</div>
<div class="t" style="left:711px;top:500px;letter-spacing:0.35px;">Original</div>
<div class="t" style="left:814px;top:500px;width:106.2px;text-align:right;letter-spacing:0.35px;">18,864</div>
<div class="t" style="left:921px;top:500px;width:104.2px;text-align:right;letter-spacing:0.35px;">18,864</div>
<div style="left:64px;top:517px;width:19px;height:21px;background:#f0f0f0;border-bottom:1px solid #fff;"></div>
<div class="t" style="left:67px;top:520px;">7</div>
<div style="left:83px;top:517px;width:569px;height:21px;background:#ffffff;"></div>
<div style="left:652px;top:517px;width:374px;height:21px;background:#fafae3;"></div>
<div style="left:109px;top:517px;width:1px;height:21px;background:rgba(0,0,0,0.075);"></div>
<div style="left:135px;top:517px;width:1px;height:21px;background:rgba(0,0,0,0.075);"></div>
<div style="left:197px;top:517px;width:1px;height:21px;background:rgba(0,0,0,0.075);"></div>
<div style="left:365px;top:517px;width:1px;height:21px;background:rgba(0,0,0,0.075);"></div>
<div style="left:384px;top:517px;width:1px;height:21px;background:rgba(0,0,0,0.075);"></div>
<div style="left:440px;top:517px;width:1px;height:21px;background:rgba(0,0,0,0.075);"></div>
<div style="left:546px;top:517px;width:1px;height:21px;background:rgba(0,0,0,0.075);"></div>
<div style="left:652px;top:517px;width:1px;height:21px;background:rgba(0,0,0,0.075);"></div>
<div style="left:708px;top:517px;width:1px;height:21px;background:rgba(0,0,0,0.075);"></div>
<div style="left:814px;top:517px;width:1px;height:21px;background:rgba(0,0,0,0.075);"></div>
<div style="left:921px;top:517px;width:1px;height:21px;background:rgba(0,0,0,0.075);"></div>
<div style="left:83px;top:537px;width:943px;height:1px;background:rgba(0,0,0,0.06);"></div>
<div class="t" style="left:138.5px;top:521px;letter-spacing:0.4px;">600087</div>
<div class="t" style="left:200.5px;top:521px;letter-spacing:-0.05px;">BOND ERBSEN</div>
<div class="t" style="left:384px;top:521px;width:55.2px;text-align:right;letter-spacing:0.35px;">2</div>
<div class="t" style="left:443px;top:521px;letter-spacing:0.35px;">Original</div>
<div class="t" style="left:546px;top:521px;width:105.2px;text-align:right;letter-spacing:0.35px;">6,912</div>
<div class="t" style="left:652px;top:521px;width:55.2px;text-align:right;letter-spacing:0.35px;">2</div>
<div class="t" style="left:711px;top:521px;letter-spacing:0.35px;">Original</div>
<div class="t" style="left:814px;top:521px;width:106.2px;text-align:right;letter-spacing:0.35px;">6,912</div>
<div class="t" style="left:921px;top:521px;width:104.2px;text-align:right;letter-spacing:0.35px;">13,824</div>
<div style="left:64px;top:538px;width:19px;height:21px;background:#f0f0f0;border-bottom:1px solid #fff;"></div>
<div class="t" style="left:67px;top:541px;">8</div>
<div style="left:83px;top:538px;width:569px;height:21px;background:#ebf6fd;"></div>
<div style="left:652px;top:538px;width:374px;height:21px;background:#f5f3cb;"></div>
<div style="left:109px;top:538px;width:1px;height:21px;background:rgba(0,0,0,0.075);"></div>
<div style="left:135px;top:538px;width:1px;height:21px;background:rgba(0,0,0,0.075);"></div>
<div style="left:197px;top:538px;width:1px;height:21px;background:rgba(0,0,0,0.075);"></div>
<div style="left:365px;top:538px;width:1px;height:21px;background:rgba(0,0,0,0.075);"></div>
<div style="left:384px;top:538px;width:1px;height:21px;background:rgba(0,0,0,0.075);"></div>
<div style="left:440px;top:538px;width:1px;height:21px;background:rgba(0,0,0,0.075);"></div>
<div style="left:546px;top:538px;width:1px;height:21px;background:rgba(0,0,0,0.075);"></div>
<div style="left:652px;top:538px;width:1px;height:21px;background:rgba(0,0,0,0.075);"></div>
<div style="left:708px;top:538px;width:1px;height:21px;background:rgba(0,0,0,0.075);"></div>
<div style="left:814px;top:538px;width:1px;height:21px;background:rgba(0,0,0,0.075);"></div>
<div style="left:921px;top:538px;width:1px;height:21px;background:rgba(0,0,0,0.075);"></div>
<div style="left:83px;top:558px;width:943px;height:1px;background:rgba(0,0,0,0.06);"></div>
<div class="t" style="left:138.5px;top:542px;letter-spacing:0.4px;">700650</div>
<div class="t" style="left:200.5px;top:542px;letter-spacing:-0.05px;">THUNFISCH-STUECK/OEL..</div>
<div class="t" style="left:384px;top:542px;width:55.2px;text-align:right;letter-spacing:0.35px;">2</div>
<div class="t" style="left:443px;top:542px;letter-spacing:0.35px;">Original</div>
<div class="t" style="left:546px;top:542px;width:105.2px;text-align:right;letter-spacing:0.35px;">24,192</div>
<div class="t" style="left:652px;top:542px;width:53.2px;text-align:right;letter-spacing:0.35px;">1</div>
<div class="t" style="left:711px;top:542px;letter-spacing:0.35px;">Original</div>
<div class="t" style="left:814px;top:542px;width:106.2px;text-align:right;letter-spacing:0.35px;">12,051</div>
<div class="t" style="left:921px;top:542px;width:104.2px;text-align:right;letter-spacing:0.35px;">12,051</div>
<div style="left:64px;top:559px;width:19px;height:21px;background:#f0f0f0;border-bottom:1px solid #fff;"></div>
<div class="t" style="left:67px;top:562px;">9</div>
<div style="left:83px;top:559px;width:569px;height:21px;background:#ffffff;"></div>
<div style="left:652px;top:559px;width:374px;height:21px;background:#fafae3;"></div>
<div style="left:109px;top:559px;width:1px;height:21px;background:rgba(0,0,0,0.075);"></div>
<div style="left:135px;top:559px;width:1px;height:21px;background:rgba(0,0,0,0.075);"></div>
<div style="left:197px;top:559px;width:1px;height:21px;background:rgba(0,0,0,0.075);"></div>
<div style="left:365px;top:559px;width:1px;height:21px;background:rgba(0,0,0,0.075);"></div>
<div style="left:384px;top:559px;width:1px;height:21px;background:rgba(0,0,0,0.075);"></div>
<div style="left:440px;top:559px;width:1px;height:21px;background:rgba(0,0,0,0.075);"></div>
<div style="left:546px;top:559px;width:1px;height:21px;background:rgba(0,0,0,0.075);"></div>
<div style="left:652px;top:559px;width:1px;height:21px;background:rgba(0,0,0,0.075);"></div>
<div style="left:708px;top:559px;width:1px;height:21px;background:rgba(0,0,0,0.075);"></div>
<div style="left:814px;top:559px;width:1px;height:21px;background:rgba(0,0,0,0.075);"></div>
<div style="left:921px;top:559px;width:1px;height:21px;background:rgba(0,0,0,0.075);"></div>
<div style="left:83px;top:579px;width:943px;height:1px;background:rgba(0,0,0,0.06);"></div>
<div class="t" style="left:138.5px;top:563px;letter-spacing:0.4px;">5616106</div>
<div class="t" style="left:200.5px;top:563px;letter-spacing:-0.05px;">HUWEI GEWUERZMARIN ..</div>
<div class="t" style="left:384px;top:563px;width:55.2px;text-align:right;letter-spacing:0.35px;">2</div>
<div class="t" style="left:443px;top:563px;letter-spacing:0.35px;">Anbruch</div>
<div class="t" style="left:546px;top:563px;width:105.2px;text-align:right;letter-spacing:0.35px;">1,940</div>
<div class="t" style="left:652px;top:563px;width:55.2px;text-align:right;letter-spacing:0.35px;">2</div>
<div class="t" style="left:711px;top:563px;letter-spacing:0.35px;">Anbruch</div>
<div class="t" style="left:814px;top:563px;width:106.2px;text-align:right;letter-spacing:0.35px;">1,940</div>
<div class="t" style="left:921px;top:563px;width:104.2px;text-align:right;letter-spacing:0.35px;">3,880</div>
<div style="left:64px;top:580px;width:19px;height:21px;background:#f0f0f0;border-bottom:1px solid #fff;"></div>
<div class="t" style="left:67px;top:583px;">10</div>
<div style="left:83px;top:580px;width:569px;height:21px;background:#ebf6fd;"></div>
<div style="left:652px;top:580px;width:374px;height:21px;background:#f5f3cb;"></div>
<div style="left:109px;top:580px;width:1px;height:21px;background:rgba(0,0,0,0.075);"></div>
<div style="left:135px;top:580px;width:1px;height:21px;background:rgba(0,0,0,0.075);"></div>
<div style="left:197px;top:580px;width:1px;height:21px;background:rgba(0,0,0,0.075);"></div>
<div style="left:365px;top:580px;width:1px;height:21px;background:rgba(0,0,0,0.075);"></div>
<div style="left:384px;top:580px;width:1px;height:21px;background:rgba(0,0,0,0.075);"></div>
<div style="left:440px;top:580px;width:1px;height:21px;background:rgba(0,0,0,0.075);"></div>
<div style="left:546px;top:580px;width:1px;height:21px;background:rgba(0,0,0,0.075);"></div>
<div style="left:652px;top:580px;width:1px;height:21px;background:rgba(0,0,0,0.075);"></div>
<div style="left:708px;top:580px;width:1px;height:21px;background:rgba(0,0,0,0.075);"></div>
<div style="left:814px;top:580px;width:1px;height:21px;background:rgba(0,0,0,0.075);"></div>
<div style="left:921px;top:580px;width:1px;height:21px;background:rgba(0,0,0,0.075);"></div>
<div style="left:83px;top:600px;width:943px;height:1px;background:rgba(0,0,0,0.06);"></div>
<div class="t" style="left:138.5px;top:584px;letter-spacing:0.4px;">5616108</div>
<div class="t" style="left:200.5px;top:584px;letter-spacing:-0.05px;">HUWAI GEWUERZMARIN M..</div>
<div class="t" style="left:384px;top:584px;width:55.2px;text-align:right;letter-spacing:0.35px;">2</div>
<div class="t" style="left:443px;top:584px;letter-spacing:0.35px;">Anbruch</div>
<div class="t" style="left:546px;top:584px;width:105.2px;text-align:right;letter-spacing:0.35px;">1,940</div>
<div class="t" style="left:652px;top:584px;width:55.2px;text-align:right;letter-spacing:0.35px;">4</div>
<div class="t" style="left:711px;top:584px;letter-spacing:0.35px;">Original</div>
<div class="t" style="left:814px;top:584px;width:106.2px;text-align:right;letter-spacing:0.35px;">7,760</div>
<div class="t" style="left:921px;top:584px;width:104.2px;text-align:right;letter-spacing:0.35px;">31,040</div>
<div style="left:64px;top:601px;width:19px;height:21px;background:#f0f0f0;border-bottom:1px solid #fff;"></div>
<div class="t" style="left:67px;top:604px;">11</div>
<div style="left:83px;top:601px;width:569px;height:21px;background:#ffffff;"></div>
<div style="left:652px;top:601px;width:374px;height:21px;background:#fafae3;"></div>
<div style="left:109px;top:601px;width:1px;height:21px;background:rgba(0,0,0,0.075);"></div>
<div style="left:135px;top:601px;width:1px;height:21px;background:rgba(0,0,0,0.075);"></div>
<div style="left:197px;top:601px;width:1px;height:21px;background:rgba(0,0,0,0.075);"></div>
<div style="left:365px;top:601px;width:1px;height:21px;background:rgba(0,0,0,0.075);"></div>
<div style="left:384px;top:601px;width:1px;height:21px;background:rgba(0,0,0,0.075);"></div>
<div style="left:440px;top:601px;width:1px;height:21px;background:rgba(0,0,0,0.075);"></div>
<div style="left:546px;top:601px;width:1px;height:21px;background:rgba(0,0,0,0.075);"></div>
<div style="left:652px;top:601px;width:1px;height:21px;background:rgba(0,0,0,0.075);"></div>
<div style="left:708px;top:601px;width:1px;height:21px;background:rgba(0,0,0,0.075);"></div>
<div style="left:814px;top:601px;width:1px;height:21px;background:rgba(0,0,0,0.075);"></div>
<div style="left:921px;top:601px;width:1px;height:21px;background:rgba(0,0,0,0.075);"></div>
<div style="left:83px;top:621px;width:943px;height:1px;background:rgba(0,0,0,0.06);"></div>
<div class="t" style="left:138.5px;top:605px;letter-spacing:0.4px;"></div>
<div class="t" style="left:200.5px;top:605px;letter-spacing:-0.05px;"></div>
<div class="t" style="left:384px;top:605px;width:55.2px;text-align:right;letter-spacing:0.35px;"></div>
<div class="t" style="left:443px;top:605px;letter-spacing:0.35px;"></div>
<div class="t" style="left:546px;top:605px;width:105.2px;text-align:right;letter-spacing:0.35px;"></div>
<div class="t" style="left:652px;top:605px;width:55.2px;text-align:right;letter-spacing:0.35px;"></div>
<div class="t" style="left:711px;top:605px;letter-spacing:0.35px;"></div>
<div class="t" style="left:814px;top:605px;width:106.2px;text-align:right;letter-spacing:0.35px;"></div>
<div class="t" style="left:921px;top:605px;width:104.2px;text-align:right;letter-spacing:0.35px;"></div>
</div>
<div style="left:372px;top:420px;width:5px;height:5px;background:radial-gradient(circle at 40% 35%, #4a5cff, #0a0a9c 70%);border-radius:50%;"></div>
<div style="left:1028px;top:369px;width:16px;height:237px;background:#f0f0f0;"></div>
<div style="left:1028px;top:386px;width:15px;height:186px;background:#cdcdcd;"></div>
<div style="left:244px;top:606px;width:783px;height:16px;background:#f0f0f0;"></div>
<div class="t" style="left:108px;top:610px;font-size:9.5px;font-weight:bold;letter-spacing:0.3px;color:#1b3766;">11 Belegpositionen</div>
<svg style="left:0;top:0" width="1062" height="689" viewBox="0 0 1062 689"><g fill="none" stroke-width="2.1" stroke-linecap="butt"><path d="M1027.8 168.2 L1030.9 164.3 L1034 168.2" stroke="#c4c4c4"/><path d="M1027.8 312 L1030.9 316 L1034 312" stroke="#c4c4c4"/><path d="M259.2 345 L255 347.65 L259.2 350.3" stroke="#c4c4c4"/><path d="M1011.8 344.8 L1016 347.45000000000005 L1011.8 350.1" stroke="#c4c4c4"/><path d="M1033 380 L1035.7 376.2 L1038.4 380" stroke="#555555"/><path d="M1033 596 L1035.7 599.8 L1038.4 596" stroke="#555555"/><path d="M254.2 611.8 L250 614.45 L254.2 617.1" stroke="#c4c4c4"/><path d="M1016.8 611.8 L1021 614.45 L1016.8 617.1" stroke="#b8b8b8"/></g></svg>
<div style="left:268px;top:434px;width:273px;height:111px;background:#f0f0f0;border:1px solid #979797;box-shadow:2px 2px 2px rgba(0,0,0,0.55);"></div>
<div class="t" style="left:284.5px;top:441px;letter-spacing:0.14px;">Alle Artikel markieren</div>
<div class="t" style="left:284.5px;top:462px;letter-spacing:0.14px;">Alle Artikel abw&auml;hlen</div>
<div style="left:271px;top:479px;width:267px;height:21px;background:#0078d7;"></div>
<div class="t" style="left:284.5px;top:483px;color:#fff;letter-spacing:0.14px;">Markierte Artikel in Wareneingang</div>
<div class="t" style="left:284.5px;top:504px;letter-spacing:0.14px;">Markierte Eintr&auml;ge ins Lager &uuml;bernehmen ...</div>
<div class="t" style="left:284.5px;top:525px;letter-spacing:0.14px;">In Einkaufsliste &uuml;bernehmen</div>
<svg style="left:526px;top:526px" width="5" height="9" viewBox="0 0 5 9"><path d="M0 0 L4.5 4.5 L0 9 Z" fill="#000"/></svg>
<div style="left:65px;top:632px;width:148px;height:28px;background:#e1e1e1;border:1px solid #adadad;"></div>
<div class="t" style="left:65px;top:639px;width:148px;text-align:center;letter-spacing:0.22px;">Druckreports...</div>
<div style="left:527px;top:632px;width:123px;height:28px;background:#e1e1e1;border:1px solid #adadad;"></div>
<div class="t" style="left:527px;top:639px;width:123px;text-align:center;letter-spacing:0.22px;">Alle markieren</div>
<div style="left:655px;top:632px;width:123px;height:28px;background:#e1e1e1;border:1px solid #adadad;"></div>
<div class="t" style="left:655px;top:639px;width:123px;text-align:center;letter-spacing:0.22px;">Alle abw&auml;hlen</div>
<div style="left:783px;top:632px;width:260px;height:28px;background:#e1e1e1;border:1px solid #adadad;"></div>
<div class="t" style="left:783px;top:639px;width:260px;text-align:center;letter-spacing:0.22px;">Markierte Artikel in Wareneingang</div>
<svg style="left:0;top:0" width="1062" height="689" viewBox="0 0 1062 689"><g fill="none" stroke="#dc0a14" stroke-width="2.3"><ellipse cx="173.5" cy="178.5" rx="69" ry="61"/><ellipse cx="297" cy="422" rx="102.5" ry="10.2"/><ellipse cx="404" cy="487.2" rx="146.5" ry="14.2"/><ellipse cx="912.3" cy="645.1" rx="139.6" ry="24.4"/></g></svg>
<svg style="left:0;top:0" width="1062" height="689" viewBox="0 0 1062 689"><g fill="none" stroke="#dc0a14" stroke-width="1.9" stroke-linecap="round" stroke-linejoin="round"><path d="M220.6 108.6 L224.3 105.8 L224.3 118.6"/><path d="M469.7 183.6 Q471.5 181.6 474 181.7 Q477.7 182 477.5 185.5 Q477.2 188 473 191.6 L469.6 194.9 L478 194.9"/><path d="M392.2 394.5 Q394 393.3 396.5 393.4 Q400.4 393.7 400.3 396.8 Q400 399.9 395 400.1 Q401.1 400.5 401 403.8 Q400.8 407.1 396.3 407.1 Q393.6 407.1 392.2 405.9"/><path d="M560.2 462.7 L554 471.7 L563.4 471.7 M560.2 462.7 L560.2 476.4"/><path d="M1009.8 602 L1003.7 602 L1003.2 607.1 Q1005 606.4 1006.8 606.6 Q1010.7 607.1 1010.7 610.8 Q1010.5 615 1006 615 Q1003.8 615 1002.6 614"/></g></svg>
</div></body></html>
